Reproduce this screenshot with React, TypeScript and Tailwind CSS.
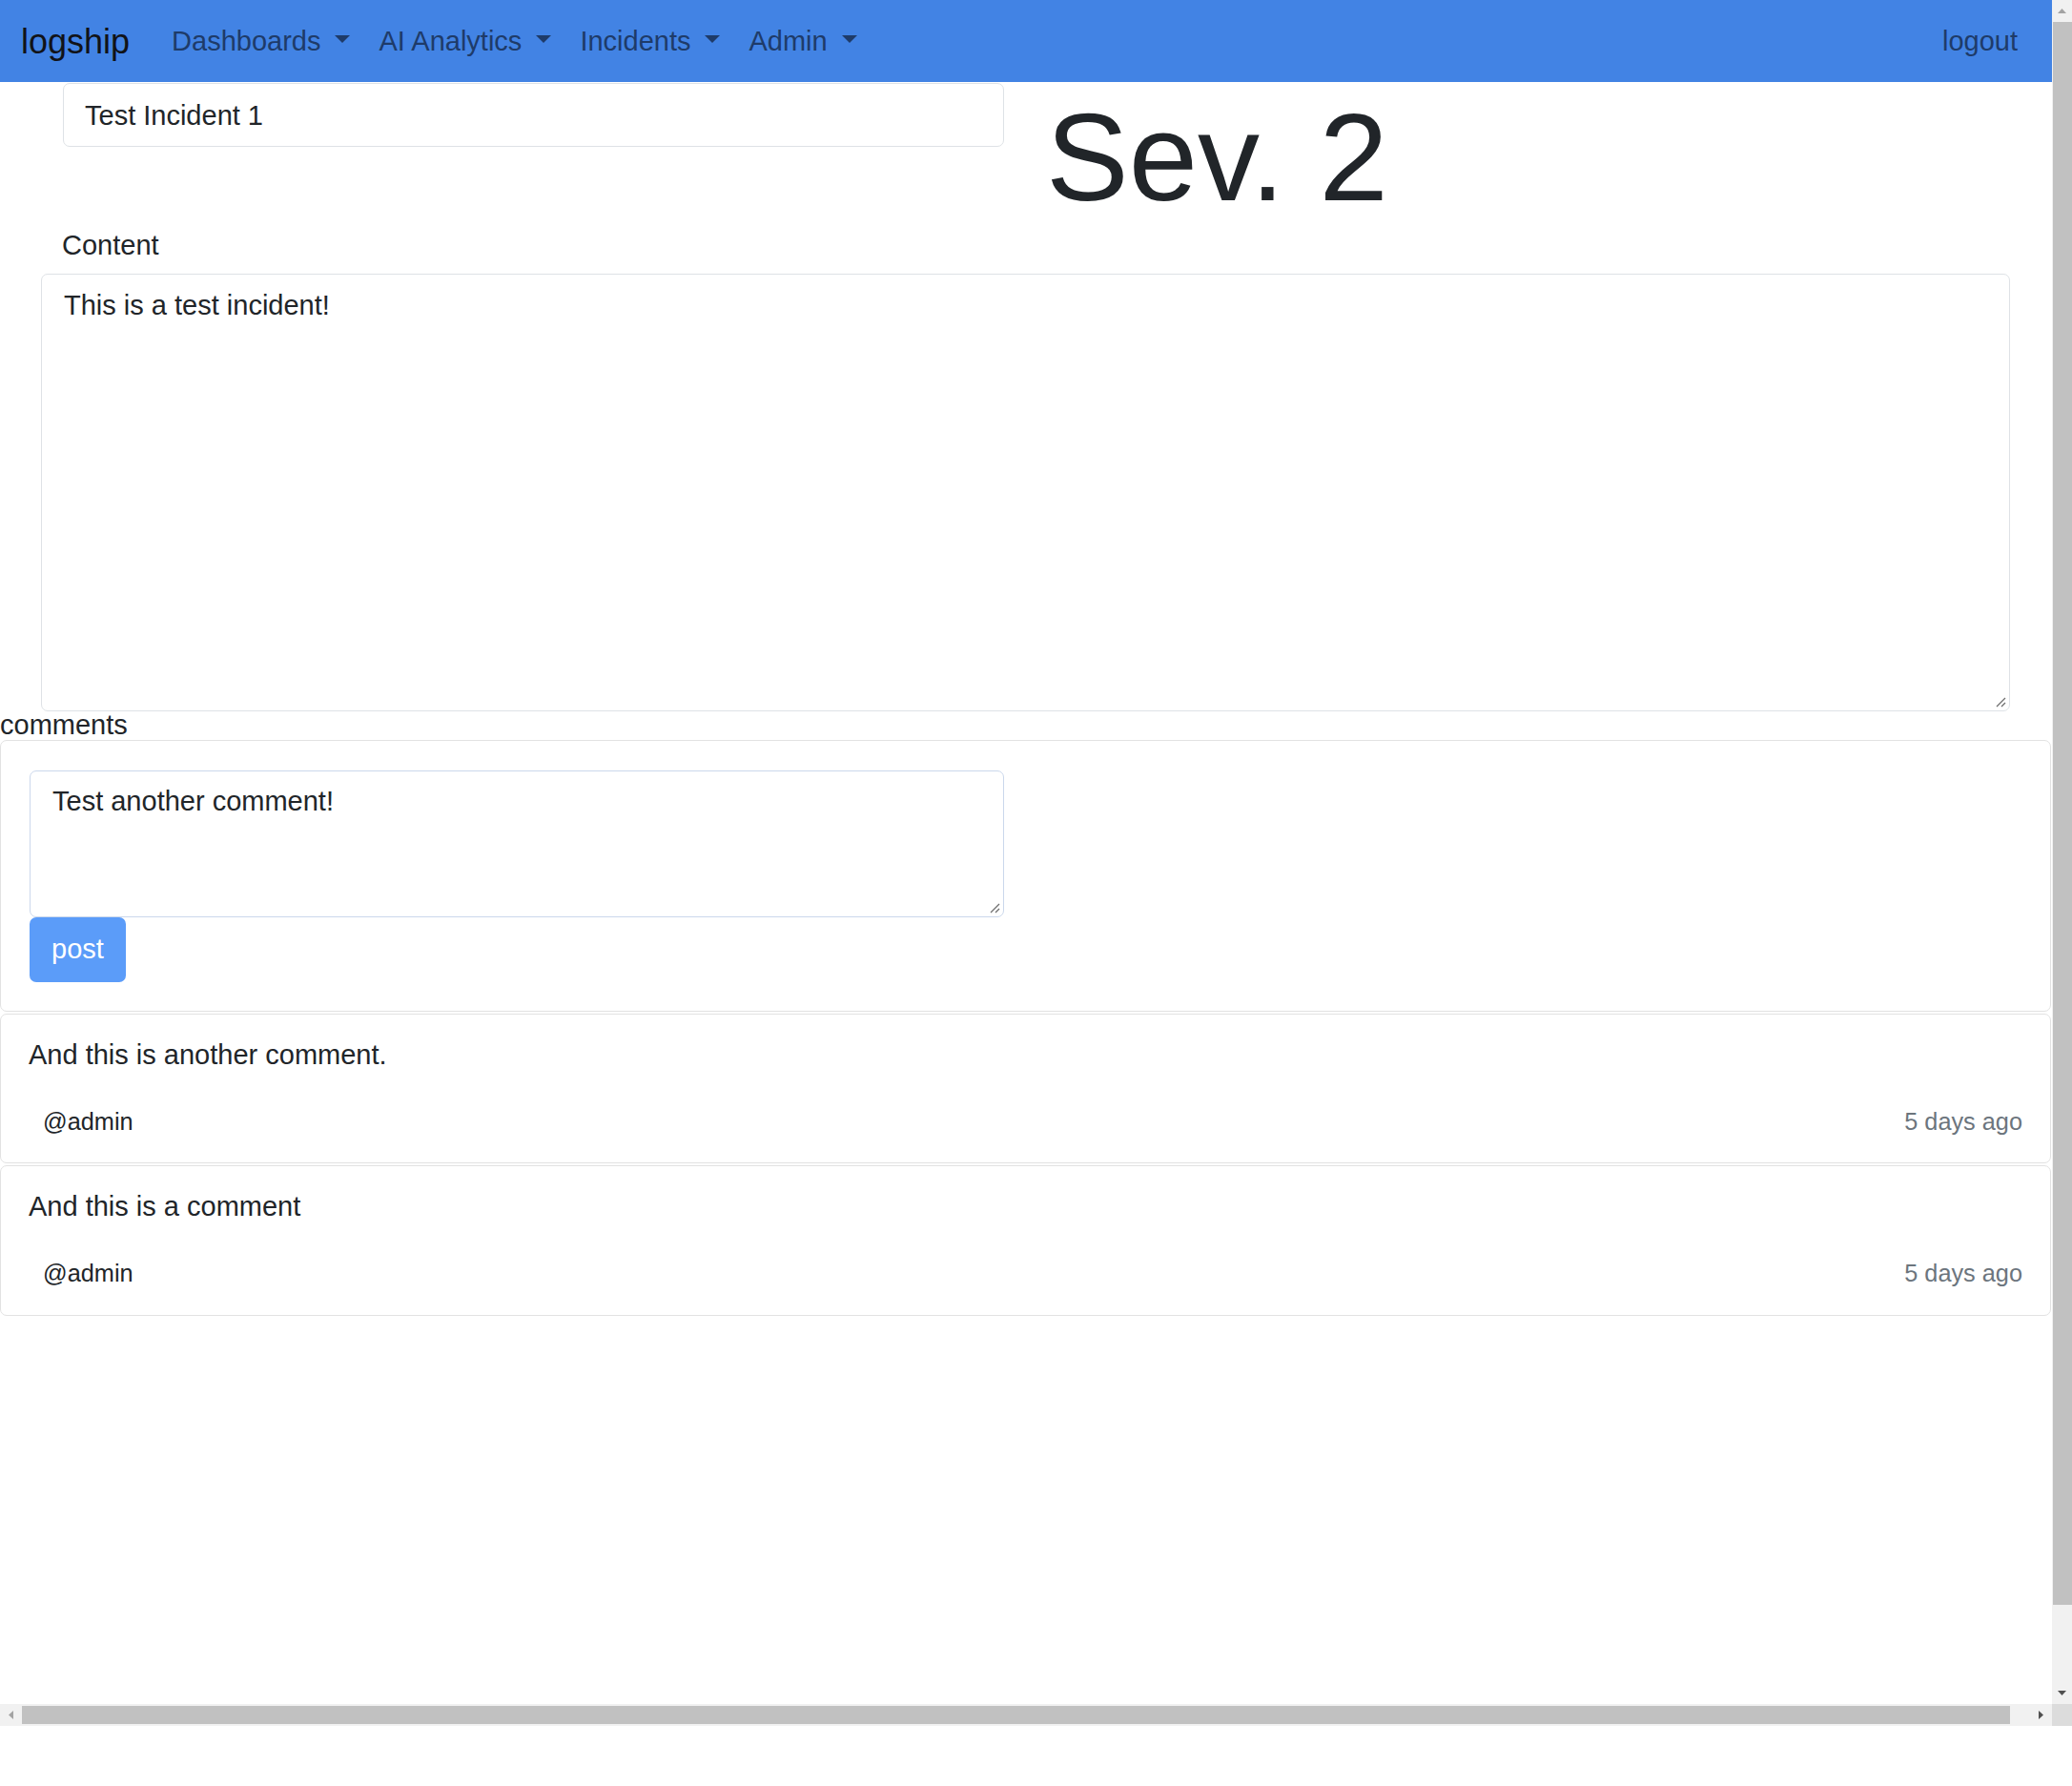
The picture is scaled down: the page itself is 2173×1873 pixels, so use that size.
import React from "react";

function Caret({ color }: { color: string }) {
  return (
    <svg width="16" height="8" viewBox="0 0 16 8" className="ml-[15px] mb-[6px]">
      <polygon points="0,0 16,0 8,8" fill={color} />
    </svg>
  );
}

function Grip() {
  return (
    <svg width="11" height="11" viewBox="0 0 11 11" className="absolute right-[3px] bottom-[3px]">
      <line x1="10" y1="1" x2="1" y2="10" stroke="#6f6f6f" strokeWidth="1.3" />
      <line x1="10" y1="6" x2="6" y2="10" stroke="#6f6f6f" strokeWidth="1.3" />
    </svg>
  );
}

function Comment({ text }: { text: string }) {
  return (
    <div className="mt-[2px] w-[2151px] border border-[#e2e2e2] rounded-[7px] px-[29px] pt-[21px] pb-[24px]">
      <div className="leading-[1.5]">{text}</div>
      <div className="mt-[29px] pl-[15px] flex justify-between text-[25.3px] leading-[1.5]">
        <span>@admin</span>
        <span className="text-[#6c757d]">5 days ago</span>
      </div>
    </div>
  );
}

export default function App() {
  const navItems = ["Dashboards", "AI Analytics", "Incidents", "Admin"];
  return (
    <div className="w-[2173px] h-[1873px] bg-white flex flex-col overflow-hidden [font-family:'Liberation_Sans',Arial,sans-serif]">
      <div className="flex h-[1787px]">
        <div className="w-[2152px] h-full flex flex-col text-[29px] text-[#212529] overflow-hidden">
          <nav className="h-[86px] shrink-0 bg-[#4283e4] flex items-center pt-[2px] pl-[22px] pr-[36px]">
            <span className="text-[36px] text-[#111318]">logship</span>
            <div className="flex items-center ml-[44px] gap-[30px] text-[29px] text-[#1e3b69]">
              {navItems.map((i) => (
                <div key={i} className="flex items-center">
                  <span>{i}</span>
                  <Caret color="#1e3b69" />
                </div>
              ))}
            </div>
            <span className="ml-auto text-[29px] text-[#1e3b69]">logout</span>
          </nav>

          <div className="flex items-start pt-[1px]">
            <div className="ml-[66px] w-[987px] h-[67px] border border-[#dee2e6] rounded-[7px] flex items-center pt-[2px] pl-[22px]">
              Test Incident 1
            </div>
            <h1 className="ml-[44px] mt-[13px] text-[130px] leading-[130px] text-[#212529]">Sev. 2</h1>
          </div>

          <div className="mt-[6px] ml-[65px] leading-[1.5]">Content</div>

          <div className="relative mt-[7.5px] ml-[43px] w-[2065px] h-[459px] shrink-0 border border-[#dee2e6] rounded-[7px] pl-[23px] pt-[11px] leading-[1.5]">
            This is a test incident!
            <Grip />
          </div>

          <div className="mt-[1px] leading-[26px]">comments</div>

          <div className="mt-[3px] w-[2151px] border border-[#e2e2e2] rounded-[7px] px-[30px] pt-[31px] pb-[30px]">
            <div className="relative w-[1022px] h-[154px] border border-[#cbd8ec] rounded-[7px] pl-[23px] pt-[10px] leading-[1.5]">
              Test another comment!
              <Grip />
            </div>
            <div className="w-[101px] h-[68px] bg-[#5b9cf9] rounded-[7px] text-white flex items-center justify-center">
              post
            </div>
          </div>

          <Comment text="And this is another comment." />
          <Comment text="And this is a comment" />
        </div>

        {/* vertical scrollbar */}
        <div className="w-[21px] h-full bg-[#f1f1f1] flex flex-col">
          <div className="h-[23px] flex items-center justify-center">
            <svg width="9" height="5" viewBox="0 0 9 5">
              <polygon points="0,5 9,5 4.5,0" fill="#a3a3a3" />
            </svg>
          </div>
          <div className="h-[1660px] ml-[1px] bg-[#c1c1c1]" />
          <div className="flex-1" />
          <div className="h-[23px] flex items-center justify-center">
            <svg width="9" height="5" viewBox="0 0 9 5">
              <polygon points="0,0 9,0 4.5,5" fill="#505050" />
            </svg>
          </div>
        </div>
      </div>

      {/* horizontal scrollbar */}
      <div className="flex h-[23px]">
        <div className="w-[2152px] h-full bg-[#f1f1f1] flex items-center">
          <div className="w-[23px] h-full flex items-center justify-center">
            <svg width="5" height="9" viewBox="0 0 5 9">
              <polygon points="5,0 5,9 0,4.5" fill="#a3a3a3" />
            </svg>
          </div>
          <div className="w-[2085px] h-[19px] bg-[#c1c1c1]" />
          <div className="flex-1" />
          <div className="w-[23px] h-full flex items-center justify-center">
            <svg width="5" height="9" viewBox="0 0 5 9">
              <polygon points="0,0 0,9 5,4.5" fill="#505050" />
            </svg>
          </div>
        </div>
        <div className="w-[21px] h-full bg-[#dcdcdc]" />
      </div>
    </div>
  );
}
